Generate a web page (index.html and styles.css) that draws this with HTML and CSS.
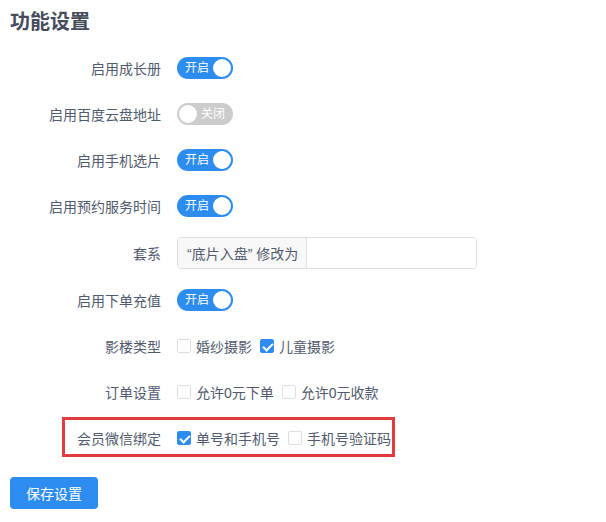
FILE: index.html
```html
<!DOCTYPE html>
<html lang="zh-CN">
<head>
<meta charset="utf-8">
<title>功能设置</title>
<link rel="stylesheet" href="styles.css">
</head>
<body>
<div class="page">
  <h1 class="title">功能设置</h1>
  <form class="form">
    <div class="row">
      <label class="label">启用成长册</label>
      <div class="control"><span class="switch on"><span class="switch-text">开启</span></span></div>
    </div>
    <div class="row">
      <label class="label">启用百度云盘地址</label>
      <div class="control"><span class="switch off"><span class="switch-text">关闭</span></span></div>
    </div>
    <div class="row">
      <label class="label">启用手机选片</label>
      <div class="control"><span class="switch on"><span class="switch-text">开启</span></span></div>
    </div>
    <div class="row">
      <label class="label">启用预约服务时间</label>
      <div class="control"><span class="switch on"><span class="switch-text">开启</span></span></div>
    </div>
    <div class="row row-input">
      <label class="label">套系</label>
      <div class="control">
        <div class="input-group">
          <span class="prepend">“底片入盘” 修改为</span>
          <input class="input" type="text">
        </div>
      </div>
    </div>
    <div class="row">
      <label class="label">启用下单充值</label>
      <div class="control"><span class="switch on"><span class="switch-text">开启</span></span></div>
    </div>
    <div class="row">
      <label class="label">影楼类型</label>
      <div class="control">
        <span class="check-item"><span class="checkbox"></span>婚纱摄影</span>
        <span class="check-item"><span class="checkbox checked"></span>儿童摄影</span>
      </div>
    </div>
    <div class="row">
      <label class="label">订单设置</label>
      <div class="control">
        <span class="check-item"><span class="checkbox"></span>允许0元下单</span>
        <span class="check-item"><span class="checkbox"></span>允许0元收款</span>
      </div>
    </div>
    <div class="row row-marked">
      <label class="label">会员微信绑定</label>
      <div class="control">
        <span class="check-item"><span class="checkbox checked"></span>单号和手机号</span>
        <span class="check-item"><span class="checkbox"></span>手机号验证码</span>
      </div>
      <span class="mark"></span>
    </div>
  </form>
  <button class="btn" type="button">保存设置</button>
</div>
</body>
</html>
```

FILE: styles.css
```css
* { box-sizing: border-box; }
html, body { margin: 0; padding: 0; background: #fff; }
body {
  font-family: "Liberation Sans", "Noto Sans CJK SC", sans-serif;
  font-size: 14px;
  color: #515a6e;
  overflow: hidden;
}
.page { padding: 0 10px; }
.title {
  margin: 0;
  height: 45px;
  line-height: 44px;
  font-size: 20px;
  font-weight: 700;
  color: #464c5b;
}
.form { display: flex; flex-direction: column; }
.row {
  display: flex;
  align-items: center;
  height: 46px;
}
.row-input { height: 48px; }
.row-marked { position: relative; }
.label {
  width: 167px;
  flex: none;
  padding-right: 16px;
  text-align: right;
  color: #515a6e;
}
.control {
  display: flex;
  align-items: center;
  white-space: nowrap;
}
.switch {
  position: relative;
  display: inline-block;
  width: 56px;
  height: 22px;
  border-radius: 11px;
  background: #2d8cf0;
}
.switch::after {
  content: "";
  position: absolute;
  top: 2px;
  width: 18px;
  height: 18px;
  border-radius: 50%;
  background: #fff;
}
.switch.on::after { right: 2px; }
.switch.off { background: #ccc; }
.switch.off::after { left: 2px; }
.switch-text {
  position: absolute;
  top: 0;
  line-height: 22px;
  font-size: 12px;
  color: #fff;
}
.switch.on .switch-text { left: 8px; }
.switch.off .switch-text { right: 8px; }
.input-group {
  display: flex;
  width: 300px;
  height: 32px;
  border: 1px solid #dcdee2;
  border-radius: 4px;
  overflow: hidden;
}
.prepend {
  display: flex;
  align-items: center;
  padding: 0 8px 0 9px;
  background: #f8f8f9;
  border-right: 1px solid #dcdee2;
  color: #515a6e;
  white-space: nowrap;
}
.input {
  flex: 1;
  min-width: 0;
  border: 0;
  outline: none;
  padding: 0 7px;
  font: inherit;
}
.check-item {
  display: inline-flex;
  align-items: center;
  margin-right: 8px;
}
.checkbox {
  position: relative;
  width: 14px;
  height: 14px;
  margin-right: 5px;
  border: 1px solid #dcdee2;
  border-radius: 2px;
  background: #fff;
}
.checkbox.checked {
  background: #2d8cf0;
  border-color: #2d8cf0;
}
.checkbox.checked::after {
  content: "";
  position: absolute;
  left: 4px;
  top: 1px;
  width: 4px;
  height: 8px;
  border: 2px solid #fff;
  border-top: 0;
  border-left: 0;
  transform: rotate(45deg);
}
.mark {
  position: absolute;
  left: 52px;
  top: 2px;
  width: 333px;
  height: 40px;
  border: 3px solid #e23b3b;
  pointer-events: none;
}
.btn {
  display: block;
  margin-top: 16px;
  width: 88px;
  height: 32px;
  border: 0;
  border-radius: 4px;
  background: #2d8cf0;
  color: #fff;
  font: inherit;
  font-size: 14px;
  padding: 0;
}
```
